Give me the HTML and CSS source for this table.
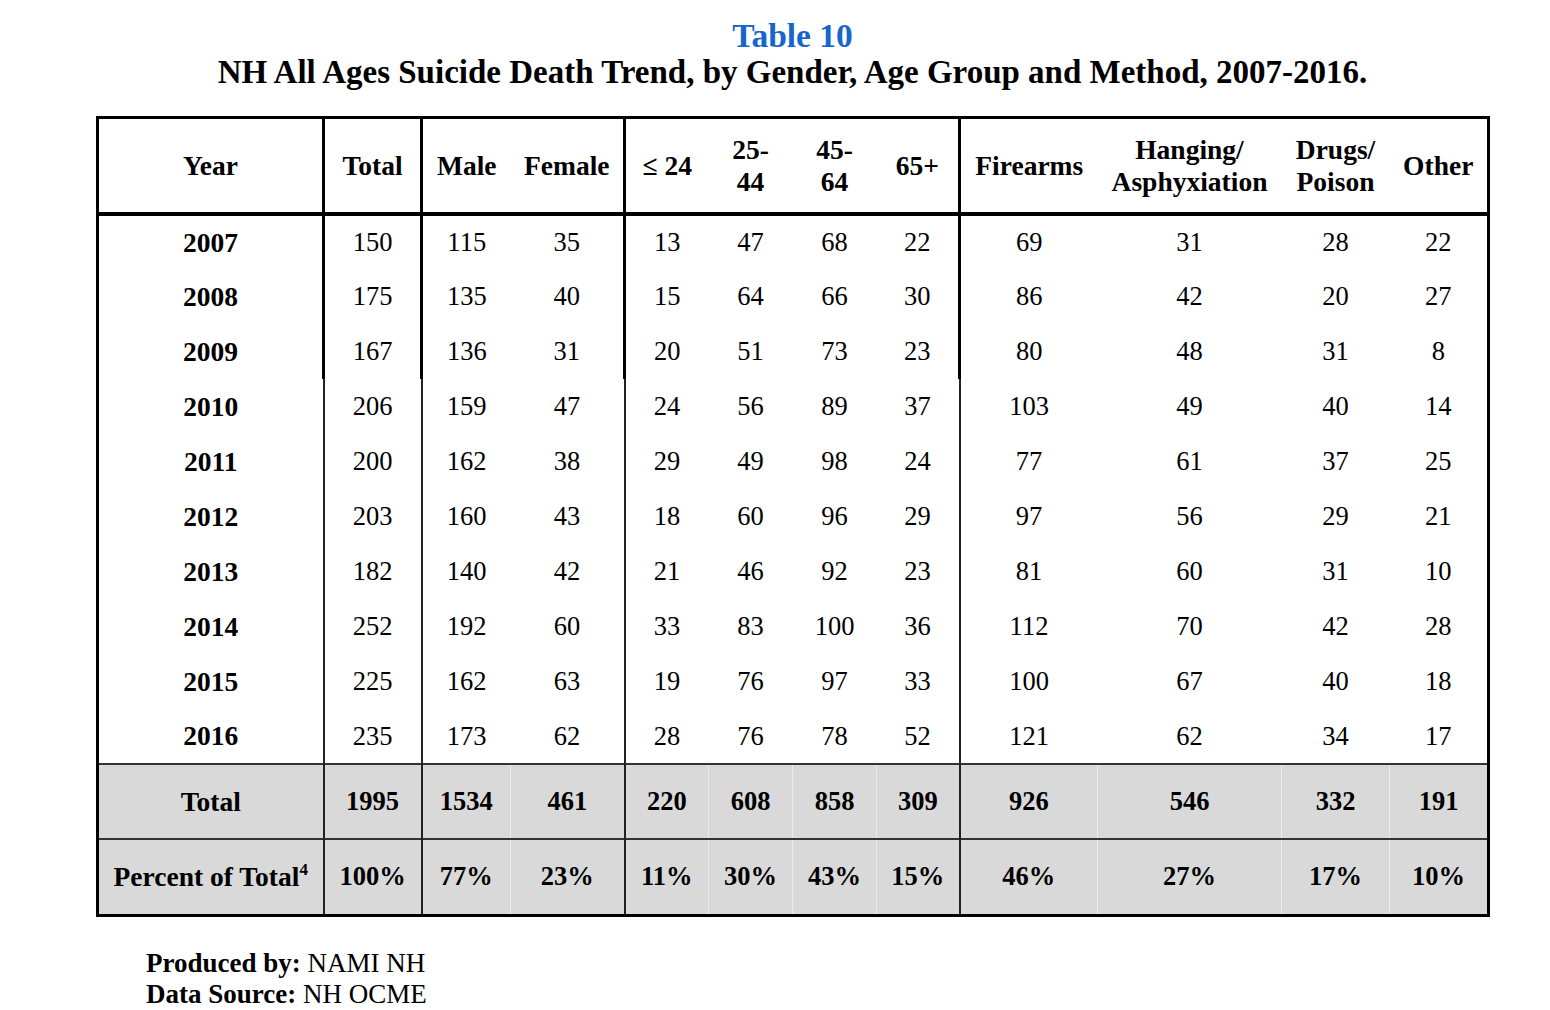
FILE: index.html
```html
<!DOCTYPE html>
<html lang="en">
<head>
<meta charset="utf-8">
<title>Table 10</title>
<link rel="stylesheet" href="styles.css">
</head>
<body>
<div class="page">
  <div class="title">Table 10</div>
  <div class="subtitle">NH All Ages Suicide Death Trend, by Gender, Age Group and Method, 2007-2016.</div>
  <table class="data">
    <colgroup>
      <col class="c-year"><col class="c-total"><col class="c-male"><col class="c-female">
      <col class="c-age"><col class="c-age"><col class="c-age"><col class="c-age65">
      <col class="c-fire"><col class="c-hang"><col class="c-drug"><col class="c-other">
    </colgroup>
    <thead>
      <tr>
        <th class="major">Year</th>
        <th class="major">Total</th>
        <th>Male</th>
        <th class="major">Female</th>
        <th><span class="le">&le;</span> 24</th>
        <th>25-<br>44</th>
        <th>45-<br>64</th>
        <th class="major">65+</th>
        <th>Firearms</th>
        <th>Hanging/<br>Asphyxiation</th>
        <th>Drugs/<br>Poison</th>
        <th>Other</th>
      </tr>
    </thead>
    <tbody>
      <tr class="thick"><th class="major">2007</th><td class="major">150</td><td>115</td><td class="major">35</td><td>13</td><td>47</td><td>68</td><td class="major">22</td><td>69</td><td>31</td><td>28</td><td>22</td></tr>
      <tr class="thick"><th class="major">2008</th><td class="major">175</td><td>135</td><td class="major">40</td><td>15</td><td>64</td><td>66</td><td class="major">30</td><td>86</td><td>42</td><td>20</td><td>27</td></tr>
      <tr class="thick"><th class="major">2009</th><td class="major">167</td><td>136</td><td class="major">31</td><td>20</td><td>51</td><td>73</td><td class="major">23</td><td>80</td><td>48</td><td>31</td><td>8</td></tr>
      <tr><th class="major">2010</th><td class="major">206</td><td>159</td><td class="major">47</td><td>24</td><td>56</td><td>89</td><td class="major">37</td><td>103</td><td>49</td><td>40</td><td>14</td></tr>
      <tr><th class="major">2011</th><td class="major">200</td><td>162</td><td class="major">38</td><td>29</td><td>49</td><td>98</td><td class="major">24</td><td>77</td><td>61</td><td>37</td><td>25</td></tr>
      <tr><th class="major">2012</th><td class="major">203</td><td>160</td><td class="major">43</td><td>18</td><td>60</td><td>96</td><td class="major">29</td><td>97</td><td>56</td><td>29</td><td>21</td></tr>
      <tr><th class="major">2013</th><td class="major">182</td><td>140</td><td class="major">42</td><td>21</td><td>46</td><td>92</td><td class="major">23</td><td>81</td><td>60</td><td>31</td><td>10</td></tr>
      <tr><th class="major">2014</th><td class="major">252</td><td>192</td><td class="major">60</td><td>33</td><td>83</td><td>100</td><td class="major">36</td><td>112</td><td>70</td><td>42</td><td>28</td></tr>
      <tr><th class="major">2015</th><td class="major">225</td><td>162</td><td class="major">63</td><td>19</td><td>76</td><td>97</td><td class="major">33</td><td>100</td><td>67</td><td>40</td><td>18</td></tr>
      <tr><th class="major">2016</th><td class="major">235</td><td>173</td><td class="major">62</td><td>28</td><td>76</td><td>78</td><td class="major">52</td><td>121</td><td>62</td><td>34</td><td>17</td></tr>
    </tbody>
    <tfoot>
      <tr class="sum"><th class="major">Total</th><td class="major">1995</td><td>1534</td><td class="major">461</td><td>220</td><td>608</td><td>858</td><td class="major">309</td><td>926</td><td>546</td><td>332</td><td>191</td></tr>
      <tr class="sum pct"><th class="major">Percent of Total<sup>4</sup></th><td class="major">100%</td><td>77%</td><td class="major">23%</td><td>11%</td><td>30%</td><td>43%</td><td class="major">15%</td><td>46%</td><td>27%</td><td>17%</td><td>10%</td></tr>
    </tfoot>
  </table>
  <div class="credits">
    <div><b>Produced by:</b> NAMI NH</div>
    <div><b>Data Source:</b> NH OCME</div>
  </div>
</div>
</body>
</html>
```

FILE: styles.css
```css
html, body {
  margin: 0;
  padding: 0;
  background: #ffffff;
}

body {
  font-family: "Liberation Serif", "Times New Roman", serif;
  color: #000000;
}

.page {
  width: 1393px;
  margin-left: 96px;
}

.title {
  text-align: center;
  color: #1766cc;
  font-weight: bold;
  font-size: 33.5px;
  line-height: 37px;
  padding-top: 17px;
}

.subtitle {
  text-align: center;
  font-weight: bold;
  font-size: 33px;
  line-height: 37px;
}

.data {
  margin-top: 25px;
  width: 1393px;
  border-collapse: collapse;
  table-layout: fixed;
  border: 3px solid #000000;
  font-size: 26.5px;
}

.c-year { width: 226px; }
.c-total { width: 98px; }
.c-male { width: 89px; }
.c-female { width: 114px; }
.c-age { width: 84px; }
.c-age65 { width: 83px; }
.c-fire { width: 138px; }
.c-hang { width: 184px; }
.c-drug { width: 108px; }
.c-other { width: 99px; }

.data th,
.data td {
  padding: 0;
  text-align: center;
  vertical-align: middle;
  white-space: nowrap;
}

.data td {
  font-weight: normal;
}

.data th {
  font-weight: bold;
  font-size: 27.5px;
}

.data thead th {
  height: 93px;
  line-height: 32px;
  border-bottom: 4px solid #000000;
}

.data thead th.major {
  border-right: 3px solid #000000;
}

.le {
  font-weight: bold;
}

.data tbody tr {
  height: 55px;
}

.data tbody tr td.major,
.data tbody tr th.major {
  border-right: 2px solid #222222;
}

.data tbody tr.thick td.major,
.data tbody tr.thick th.major {
  border-right: 3px solid #000000;
}

.data tfoot tr.sum {
  height: 75px;
  background: #d9d9d9;
}

.data tfoot tr.sum td,
.data tfoot tr.sum th {
  font-weight: bold;
  border-top: 2px solid #333333;
  border-right: 1px solid #ececec;
}

.data tfoot tr.sum td.major,
.data tfoot tr.sum th.major {
  border-right: 2px solid #222222;
}

.data tfoot tr.pct {
  height: 76px;
}

.data sup {
  font-size: 17px;
  line-height: 0;
  vertical-align: 11px;
}

.credits {
  margin-top: 31px;
  margin-left: 50px;
  font-size: 27px;
  line-height: 31px;
}

.credits b {
  font-weight: bold;
}
```
